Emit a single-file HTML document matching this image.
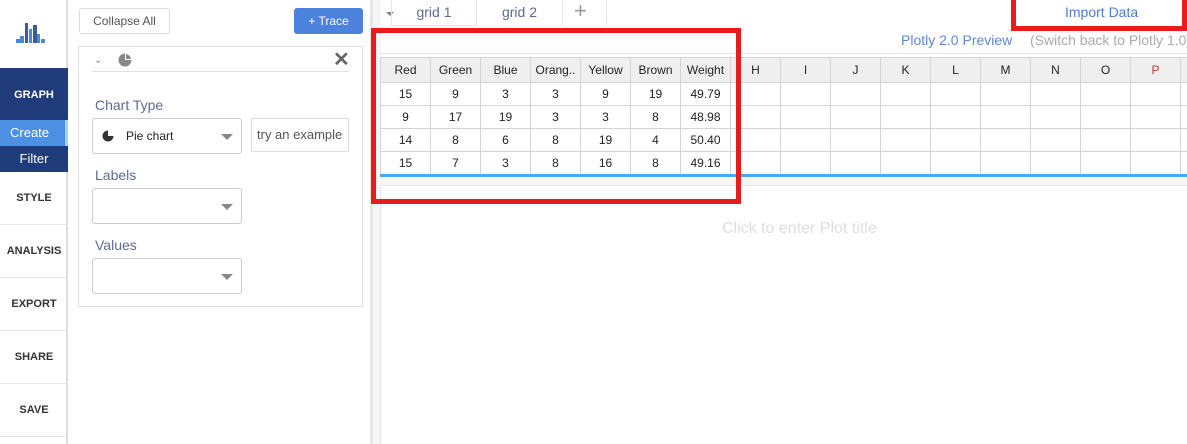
<!DOCTYPE html>
<html><head><style>
*{box-sizing:border-box;margin:0;padding:0}
body{width:1187px;height:444px;overflow:hidden;background:#fff;font-family:"Liberation Sans",sans-serif;position:relative}
.a{position:absolute}
.nav{left:0;top:0;width:68px;height:444px;background:#fff;border-right:2px solid #ddd}
.ni{position:absolute;left:0;width:68px;text-align:center;font-size:11px;font-weight:bold;color:#333;border-bottom:1px solid #e4e4e4}
.lbl{font-size:14px;color:#5e6a94}
.sel{position:absolute;border:1px solid #ccc;border-radius:3px;background:#fff}
.caret{position:absolute;right:8px;top:50%;margin-top:-2px;width:0;height:0;border-left:6px solid transparent;border-right:6px solid transparent;border-top:6px solid #888}
table{border-collapse:collapse;font-size:12px;color:#222;table-layout:fixed;width:850px}
td{width:50px;height:23px;border:1px solid #d4d4d4;text-align:center;padding:0;white-space:nowrap;overflow:hidden}
tr.h td{background:#efefef;height:25px}
</style></head><body>
<div class="a nav">
 <svg class="a" style="left:16px;top:22px" width="30" height="22"><g fill="#4a89dc"><rect x="0" y="17" width="4" height="4"/><rect x="4" y="14" width="4" height="7"/><rect x="9" y="1" width="3" height="20" fill="#3d5a99"/><rect x="13" y="7" width="3" height="14"/><rect x="17" y="3" width="4" height="18" fill="#3d5a99"/><rect x="21" y="12" width="3" height="9"/><rect x="25" y="17" width="4" height="4"/></g></svg>
 <div class="a" style="left:0;top:68px;width:68px;height:52px;background:#1f3b7a;color:#fff;font-size:11px;font-weight:bold;text-align:center;line-height:54px">GRAPH</div>
 <div class="a" style="left:0;top:120px;width:68px;height:26px;background:#4d8fe3;color:#fff;font-size:13px;line-height:26px;padding-left:10px;border-right:3px solid #a7d0f7">Create</div>
 <div class="a" style="left:0;top:146px;width:68px;height:26px;background:#1f3b7a;color:#fff;font-size:13px;line-height:26px;text-align:center">Filter</div>
 <div class="ni" style="top:172px;height:53px;line-height:53px">STYLE</div>
 <div class="ni" style="top:225px;height:53px;line-height:53px">ANALYSIS</div>
 <div class="ni" style="top:278px;height:53px;line-height:53px">EXPORT</div>
 <div class="ni" style="top:331px;height:53px;line-height:53px">SHARE</div>
 <div class="ni" style="top:384px;height:53px;line-height:53px">SAVE</div>
</div>
<div class="a" style="left:79px;top:8px;width:91px;height:26px;border:1px solid #ddd;border-radius:3px;font-size:12px;color:#555;text-align:center;line-height:24px">Collapse All</div>
<div class="a" style="left:294px;top:8px;width:69px;height:26px;background:#4a82dc;border-radius:3px;font-size:12px;color:#fff;text-align:center;line-height:26px">+ Trace</div>
<div class="a" style="left:78px;top:46px;width:285px;height:261px;border:1px solid #e2e2e2"></div>
<div class="a" style="left:92px;top:71px;width:257px;height:1px;background:#e2e2e2"></div>
<div class="a" style="left:94px;top:55px;font-size:10px;color:#888">&#8964;</div>
<svg class="a" style="left:118px;top:53px" width="14" height="14"><circle cx="7" cy="7" r="6.5" fill="#888"/><path d="M7 7V0A7 7 0 0 1 14 7Z" fill="#fff"/><path d="M8 6V1A6 6 0 0 1 13 6Z" fill="#888"/></svg>
<div class="a" style="left:333px;top:47px;font-size:20px;color:#666;font-weight:bold">&#10005;</div>
<div class="a lbl" style="left:95px;top:97px">Chart Type</div>
<div class="sel" style="left:92px;top:118px;width:150px;height:36px"><svg class="a" style="left:9px;top:11px" width="12" height="12"><circle cx="6" cy="6" r="5.5" fill="#333"/><path d="M6 6V0A6 6 0 0 1 12 6Z" fill="#fff"/></svg><span class="a" style="left:33px;top:10px;font-size:12px;color:#222">Pie chart</span><div class="caret"></div></div>
<div class="a" style="left:251px;top:118px;width:98px;height:34px;border:1px solid #ddd;font-size:13px;color:#555;line-height:32px;padding-left:5px;white-space:nowrap;overflow:hidden">try an example</div>
<div class="a lbl" style="left:95px;top:167px">Labels</div>
<div class="sel" style="left:92px;top:188px;width:150px;height:36px"><div class="caret"></div></div>
<div class="a lbl" style="left:95px;top:237px">Values</div>
<div class="sel" style="left:92px;top:258px;width:150px;height:36px"><div class="caret"></div></div>
<div class="a" style="left:370px;top:0;width:3px;height:444px;background:#e6e6e6"></div>
<div class="a" style="left:373px;top:0;width:8px;height:444px;background:#f6f6f6"></div>
<div class="a" style="left:381px;top:0;width:806px;height:27px;background:#fff"></div>
<div class="a" style="left:386px;top:12px;width:0;height:0;border-left:4px solid transparent;border-right:4px solid transparent;border-top:4px solid #888"></div>
<div class="a" style="left:391px;top:0;width:86px;height:26px;border-right:1px solid #e6e6e6;border-left:1px solid #e6e6e6;border-bottom:1px solid #e6e6e6;font-size:14px;color:#5e6a94;text-align:center;line-height:24px">grid 1</div>
<div class="a" style="left:477px;top:0;width:86px;height:26px;border-right:1px solid #e6e6e6;font-size:14px;color:#5e6a94;text-align:center;line-height:24px">grid 2</div>
<div class="a" style="left:563px;top:0;width:44px;height:26px;border-right:1px solid #e6e6e6"></div>
<div class="a" style="left:574px;top:-2px;font-size:22px;color:#999">+</div>
<div class="a" style="left:1065px;top:4px;font-size:14px;color:#4a7fd4">Import Data</div>
<div class="a" style="left:901px;top:32px;font-size:14px;color:#5c88d8">Plotly 2.0 Preview</div>
<div class="a" style="left:1030px;top:32px;font-size:14px;color:#aaa;white-space:nowrap">(Switch back to Plotly 1.0)</div>
<div class="a" style="left:379px;top:53px;width:808px;height:1px;background:#e4e4e4"></div>
<div class="a" style="left:380px;top:57px;width:807px;height:118px;overflow:hidden">
<table>
<tr class="h"><td>Red</td><td>Green</td><td>Blue</td><td>Orang..</td><td>Yellow</td><td>Brown</td><td>Weight</td><td>H</td><td>I</td><td>J</td><td>K</td><td>L</td><td>M</td><td>N</td><td>O</td><td style="color:#c33">P</td><td></td></tr>
<tr><td>15</td><td>9</td><td>3</td><td>3</td><td>9</td><td>19</td><td>49.79</td><td></td><td></td><td></td><td></td><td></td><td></td><td></td><td></td><td></td><td></td></tr>
<tr><td>9</td><td>17</td><td>19</td><td>3</td><td>3</td><td>8</td><td>48.98</td><td></td><td></td><td></td><td></td><td></td><td></td><td></td><td></td><td></td><td></td></tr>
<tr><td>14</td><td>8</td><td>6</td><td>8</td><td>19</td><td>4</td><td>50.40</td><td></td><td></td><td></td><td></td><td></td><td></td><td></td><td></td><td></td><td></td></tr>
<tr><td>15</td><td>7</td><td>3</td><td>8</td><td>16</td><td>8</td><td>49.16</td><td></td><td></td><td></td><td></td><td></td><td></td><td></td><td></td><td></td><td></td></tr>
</table></div>
<div class="a" style="left:380px;top:174px;width:807px;height:3px;background:#4aa8f0"></div>
<div class="a" style="left:380px;top:177px;width:807px;height:8px;background:#f6f6f6"></div>
<div class="a" style="left:380px;top:185px;width:807px;height:259px;border-left:1px solid #e4e4e4;border-top:1px solid #e4e4e4;background:#fff"></div>
<div class="a" style="left:722px;top:220px;font-size:16px;color:#ddd">Click to enter Plot title</div>
<div class="a" style="left:371px;top:28px;width:370px;height:176px;border:5px solid #e81c1c"></div>
<div class="a" style="left:1011px;top:-5px;width:176px;height:36px;border:5px solid #e81c1c"></div>
</body></html>
